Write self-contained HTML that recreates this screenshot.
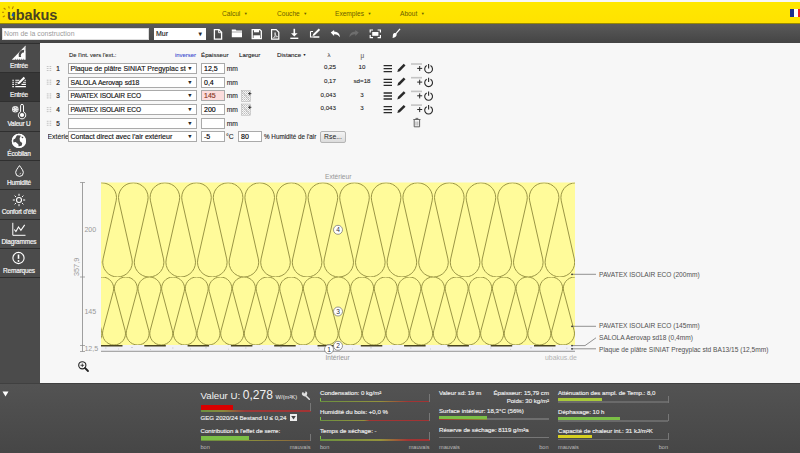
<!DOCTYPE html>
<html><head><meta charset="utf-8">
<style>
*{box-sizing:border-box;margin:0;padding:0}
html,body{width:800px;height:453px;overflow:hidden;background:#f7f7f7;font-family:"Liberation Sans",sans-serif;position:relative}
.a{position:absolute;white-space:nowrap}
#hdr{left:0;top:2px;width:800px;height:22px;background:linear-gradient(#ffe800,#ffe200);border-bottom:1px solid #9a8a00}
#tb{left:0;top:24px;width:800px;height:18.6px;background:linear-gradient(#5a5a5a,#444)}
#side{left:0;top:43px;width:40px;height:340px;background:#4b4b4b}
.si{position:absolute;left:0;width:40px;height:29px;border-top:1px solid #2f2f2f;color:#f4f4f4;font-size:6.1px;text-align:center}
.si span{position:absolute;left:-1px;width:40px;top:18px;line-height:8px;text-align:center;-webkit-text-stroke:0.2px #f4f4f4;font-size:6.5px;letter-spacing:-0.2px}
.si svg{position:absolute;left:0;top:0}
#bot{left:0;top:383px;width:800px;height:70px;background:linear-gradient(#535353,#464646);border-top:1px solid #404040}
.menu{color:#6a5d00;font-size:6.6px;top:9.5px;line-height:8px}
.menu i{font-style:normal;font-size:4px;margin-left:3.5px;position:relative;top:-1px}
.sel{-webkit-text-stroke:0.15px #222;position:absolute;background:#fff;border:1px solid #aaa;height:11px;font-size:7px;color:#111;padding-left:1.5px;line-height:10px;overflow:hidden;white-space:nowrap}
.sel b{position:absolute;right:3px;top:-1.3px;font-size:5.3px;color:#222;font-weight:normal;background:#fff;padding-left:1px}
.inp{-webkit-text-stroke:0.15px currentColor;position:absolute;background:#fff;border:1px solid #aaa;height:11px;font-size:7px;color:#000;padding-left:2px;line-height:10px}
.t6{font-size:6.2px;color:#1e1e1e;line-height:8px;-webkit-text-stroke:0.1px currentColor}
.num{font-size:6.4px;color:#222;line-height:8px;-webkit-text-stroke:0.2px #222}
.hd{font-size:5px;color:#aaa;line-height:8px;letter-spacing:-0.5px}
.wt{color:#eee;font-size:6.1px;line-height:8px;-webkit-text-stroke:0.15px #eee}
.g{color:#bbb;font-size:5.6px;line-height:7px}
.cl{font-size:6.6px;color:#505050;line-height:8px}
.trk{position:absolute;height:1.8px}
</style></head><body>
<div class="a" id="hdr"></div>
<!-- logo -->
<div class="a" style="left:7px;top:5.8px;font-size:14.5px;font-weight:bold;color:#4a4420;line-height:18px;letter-spacing:-0.1px">ubakus</div>
<svg class="a" style="left:0;top:0" width="20" height="24">
 <g stroke="#b37f00" stroke-width="1.1" stroke-linecap="round">
  <line x1="2.5" y1="12.3" x2="3.6" y2="12.3"/>
  <line x1="4" y1="8.3" x2="5.3" y2="9.2"/>
  <line x1="8.8" y1="6.7" x2="9.1" y2="8"/>
  <line x1="13.2" y1="6.8" x2="12.4" y2="8.6"/>
  <line x1="3.2" y1="16.8" x2="4.6" y2="16"/>
 </g>
 <path d="M12.9 12.2 q-1.2 2 -1.2 3 a1.2 1.2 0 0 0 2.4 0 q0-1 -1.2-3z" fill="#1d5ea8"/>
</svg>
<div class="a menu" style="left:222px">Calcul<i>&#9660;</i></div>
<div class="a menu" style="left:277px">Couche<i>&#9660;</i></div>
<div class="a menu" style="left:335px">Exemples<i>&#9660;</i></div>
<div class="a menu" style="left:400px">About<i>&#9660;</i></div>
<div class="a" style="left:790px;top:9px;width:4px;height:7.5px;background:#1c2f8c"></div>
<div class="a" style="left:794px;top:9px;width:3.5px;height:7.5px;background:#fff"></div>
<div class="a" style="left:797.5px;top:9px;width:2.5px;height:7.5px;background:#e22"></div>

<div class="a" id="tb"></div>
<div class="a" style="left:2px;top:28px;width:147px;height:12px;background:#fff;border:1px solid #ddd;font-size:6.9px;color:#9a9a9a;padding-left:1px;line-height:10px">Nom de la construction</div>
<div class="a" style="left:154px;top:28px;width:52px;height:12px;background:#fff;font-size:7px;color:#222;padding-left:2px;line-height:12px;-webkit-text-stroke:0.15px #222">Mur<span style="position:absolute;right:3px;font-size:5.5px;top:0">&#9660;</span></div>
<!-- toolbar icons -->
<svg class="a" style="left:205px;top:24px" width="200" height="19" fill="#fff" stroke="#fff">
 <path d="M9.4 5.7 h4.6 l2.6 2.6 v6.9 h-7.2z" fill="none" stroke-width="1.3"/>
 <path d="M13.6 5.7 v3 h3" fill="none" stroke-width="0.9"/>
 <path d="M26.8 5.5 h3.8 l0.8 0.9 h5.6 v1.3 h-10.2z M26.8 8.3 h10.2 v4.9 h-10.2z" stroke="none"/>
 <path d="M47.2 5.6 h7.6 l1.5 1.5 v7.6 h-9.1z" fill="none" stroke-width="1.3"/>
 <rect x="49" y="6" width="5" height="2.3" stroke="none"/>
 <rect x="48.5" y="11.3" width="6.5" height="3" stroke="none"/>
 <path d="M66.6 5.7 h4.6 l2.6 2.6 v6.9 h-7.2z" fill="none" stroke-width="1.2"/>
 <path d="M68.5 13.5 c1.5-1 2-3 1.6-5 c-0.5 2 0.5 3.5 2.5 4.2 c-1.7 0-3 0.3-4.1 0.8z" fill="none" stroke-width="0.7"/>
 <path d="M89.3 4.8 v6.3" fill="none" stroke-width="1.6"/>
 <path d="M86 9.2 h6.6 l-3.3 3.3z" stroke="none"/>
 <path d="M85.3 14.3 h8" fill="none" stroke-width="1.4"/>
 <path d="M105.5 7.5 h2.5 M105.5 7.5 v5.5 h8.5" fill="none" stroke-width="1.1"/>
 <path d="M107.5 12 l0.7-2 l5.6-5.4 l1.3 1.3 l-5.6 5.5z" stroke="none"/>
 <path d="M108.5 13 h6" fill="none" stroke-width="1"/>
 <path d="M125.7 8.5 l3.4-2.6 v1.7 c3.5 0.2 5.8 2.2 5.8 5.6 c-1.3-2-3.2-3-5.8-2.9 v1.8z" stroke="none"/>
 <path d="M153.7 8.5 l-3.4-2.6 v1.7 c-3.5 0.2-5.8 2.2-5.8 5.6 c1.3-2 3.2-3 5.8-2.9 v1.8z" fill="#6e6e6e" stroke="none"/>
 <path d="M165.2 8.6 v-2.6 h2.8 M172.6 6 h2.8 v2.6 M175.4 11 v2.6 h-2.8 M168 13.6 h-2.8 v-2.6" fill="none" stroke-width="1.2"/>
 <rect x="167.2" y="8" width="6.2" height="3.8" stroke="none"/>
 <path d="M195 4.8 l-4.3 5" fill="none" stroke-width="1.3"/>
 <path d="M189.5 9 c1.6-0.3 2.6 1 2 2.5 c-0.6 1.6-2.4 2.5-4.1 2.5 c0.6-0.7 0.3-2 0.5-3 c0.2-1 0.7-1.8 1.6-2z" stroke="none"/>
</svg>

<div class="a" id="side"></div>
<div class="si" style="top:43px">
 <svg width="40" height="20"><path d="M25.6 1.6 v14.2 h-13.8z" fill="#fff"/><path d="M24 5.8 a5.5 5.5 0 0 0 -5.2 7.2 h5.2z" fill="#4b4b4b"/><path d="M24 8.5 a3 3 0 0 0 -2.8 4.5 h2.8z" fill="#fff"/><path d="M15.5 15.8 v-1 M17.5 15.8 v-1 M19.5 15.8 v-1 M21.5 15.8 v-1 M23.5 15.8 v-1 M25.6 4 h-1 M25.6 6 h-1" stroke="#4b4b4b" stroke-width="0.6"/></svg>
 <span>Entrée</span></div>
<div class="si" style="top:72px;background:#383838">
 <svg width="40" height="20"><g stroke="#fff" stroke-width="1.1"><path d="M12.3 7.2 h1.6 M12.3 9.3 h1.6 M12.3 11.4 h1.6 M12.3 13.6 h1.6"/><path d="M15.3 7.2 h4 M15.3 9.3 h2.5 M15.3 11.4 h1.2 M15.3 13.6 h10.6 M21.5 11.4 h4.4 M23 9.3 h2.9 M24.5 7.2 h1.4"/></g><path d="M17.3 11.6 l0.9-2.3 l5.5-5.5 l1.4 1.4 l-5.5 5.5z" fill="#fff"/></svg>
 <span>Entrée</span></div>
<div class="si" style="top:101px">
 <svg width="40" height="20"><circle cx="15.3" cy="7.3" r="3.3" fill="#e8e8e8"/><g fill="#4b4b4b"><circle cx="15.3" cy="5.2" r="0.45"/><circle cx="15.3" cy="9.4" r="0.45"/><circle cx="13.5" cy="6.2" r="0.45"/><circle cx="17.1" cy="6.2" r="0.45"/><circle cx="13.5" cy="8.4" r="0.45"/><circle cx="17.1" cy="8.4" r="0.45"/></g><path d="M20.6 9.8 v-6 a1.45 1.45 0 0 1 2.9 0 v6 a3.7 3.7 0 1 1 -2.9 0z" fill="none" stroke="#fff" stroke-width="1"/><circle cx="22" cy="13" r="2.1" fill="#fff"/></svg>
 <span>Valeur U</span></div>
<div class="si" style="top:131px">
 <svg width="40" height="20"><circle cx="18.9" cy="8.9" r="7.1" fill="#fff"/><path d="M16.9 3.2 L20.9 3.4 L19.6 6.5 L20 9.2 L22.2 10.9 L21.8 13.6 L18.7 14.5 L18.3 12.2 L15.6 10 L13.4 10.5 L13.2 7.8 L15.2 6.5z M21.6 4.6 L23.4 5 L23 6.2 L21.8 6z" fill="#4b4b4b"/><circle cx="18.9" cy="8.9" r="6.6" fill="none" stroke="#fff" stroke-width="1.1"/></svg>
 <span>Écobilan</span></div>
<div class="si" style="top:160px">
 <svg width="40" height="20"><path d="M19.5 4.6 c-1.8 2.6-3.8 4.8-3.8 7 a3.8 3.8 0 0 0 7.6 0 c0-2.2-2-4.4-3.8-7z" fill="none" stroke="#fff" stroke-width="1"/><path d="M20.8 11.8 a1.3 1.3 0 0 1 -1.3 1.3" stroke="#fff" stroke-width="0.6" fill="none"/></svg>
 <span>Humidité</span></div>
<div class="si" style="top:189px">
 <svg width="40" height="20"><circle cx="19" cy="10" r="2.5" fill="none" stroke="#fff" stroke-width="1.1"/><g stroke="#fff" stroke-width="1" stroke-linecap="round"><path d="M19 4.2 v1.3 M19 14.5 v1.3 M13.2 10 h1.3 M23.5 10 h1.3 M14.9 5.9 l0.9 0.9 M22.2 13.2 l0.9 0.9 M14.9 14.1 l0.9-0.9 M22.2 6.8 l0.9-0.9"/></g></svg>
 <span>Confort d'été</span></div>
<div class="si" style="top:219px">
 <svg width="40" height="20"><path d="M12.8 2.8 v12.5 h12.7" fill="none" stroke="#fff" stroke-width="1"/><path d="M14.3 9.5 l1.6 2 l2.6-4.6 l2.4 3.3 l3.8-5.3" fill="none" stroke="#fff" stroke-width="1.1"/></svg>
 <span>Diagrammes</span></div>
<div class="si" style="top:248px">
 <svg width="40" height="20"><circle cx="18.5" cy="9" r="5.6" fill="none" stroke="#fff" stroke-width="1.1"/><path d="M18.5 5.5 v4.3" stroke="#fff" stroke-width="1.6"/><circle cx="18.5" cy="12" r="0.9" fill="#fff"/></svg>
 <span>Remarques</span></div>
<div class="a" style="left:0;top:277px;width:40px;height:1px;background:#2f2f2f"></div>

<!-- table header -->
<div class="a t6" style="left:69px;top:51px;font-size:5.9px">De l'int. vers l'ext.:</div>
<div class="a t6" style="left:175px;top:51px;color:#3b4cd0;font-size:5.9px">inverser</div>
<div class="a t6" style="left:201px;top:51px">Épaisseur</div>
<div class="a t6" style="left:239px;top:51px">Largeur</div>
<div class="a t6" style="left:277px;top:51px">Distance <span style="font-size:3.5px;position:relative;top:-1px">&#9660;</span></div>
<div class="a t6" style="left:327.5px;top:50.5px;color:#555;font-size:6px">λ</div>
<div class="a t6" style="left:360.5px;top:52px;color:#666;font-size:6.4px">μ</div>

<svg class="a" style="left:45px;top:60px" width="9" height="70">
 <g id="hh"><path d="M1 6.5 h6 M1 8.5 h6 M1 10.5 h6" stroke="#e2e2e2" stroke-width="0.6"/>
 <g fill="#b8b8b8"><rect x="2.3" y="6" width="1" height="1"/><rect x="4.8" y="6" width="1" height="1"/><rect x="2.3" y="8" width="1" height="1"/><rect x="4.8" y="8" width="1" height="1"/><rect x="2.3" y="10" width="1" height="1"/><rect x="4.8" y="10" width="1" height="1"/></g></g>
 <use href="#hh" y="13.7"/><use href="#hh" y="27.4"/><use href="#hh" y="41.1"/><use href="#hh" y="54.8"/>
</svg>
<div class="a num" style="left:56.3px;top:65px">1</div>
<div class="a num" style="left:56.3px;top:78.7px">2</div>
<div class="a num" style="left:56.3px;top:92.3px">3</div>
<div class="a num" style="left:56.3px;top:106px">4</div>
<div class="a num" style="left:56.3px;top:119.7px">5</div>
<div class="a t6" style="left:47.5px;top:133.3px;width:21px;overflow:hidden;font-size:6.9px">Extérieur</div>

<div class="sel" style="left:68px;top:63px;width:128.6px">Plaque de plâtre SINIAT Pregyplac std<b>&#9660;</b></div>
<div class="sel" style="left:68px;top:77px;width:128.6px"><span style="letter-spacing:-0.1px;word-spacing:0.5px;font-size:6.8px">SALOLA Aerovap sd18</span><b>&#9660;</b></div>
<div class="sel" style="left:68px;top:90px;width:128.6px"><span style="letter-spacing:-0.17px;word-spacing:0.6px;font-size:6.6px">PAVATEX ISOLAIR ECO</span><b>&#9660;</b></div>
<div class="sel" style="left:68px;top:104px;width:128.6px"><span style="letter-spacing:-0.17px;word-spacing:0.6px;font-size:6.6px">PAVATEX ISOLAIR ECO</span><b>&#9660;</b></div>
<div class="sel" style="left:68px;top:118px;width:128.6px"><b>&#9660;</b></div>
<div class="sel" style="left:68px;top:131px;width:128.6px">Contact direct avec l'air extérieur<b>&#9660;</b></div>

<div class="inp" style="left:201px;top:63px;width:24px">12,5</div>
<div class="inp" style="left:201px;top:77px;width:24px">0,4</div>
<div class="inp" style="left:201px;top:90px;width:24px;background:#fcdcdc;color:#832">145</div>
<div class="inp" style="left:201px;top:104px;width:24px">200</div>
<div class="inp" style="left:201px;top:118px;width:24px"></div>
<div class="inp" style="left:201px;top:131px;width:24px">-5</div>
<div class="inp" style="left:238px;top:131px;width:24px">80</div>
<div class="a t6" style="left:226.8px;top:65px;font-size:6.7px">mm</div>
<div class="a t6" style="left:226.8px;top:79px;font-size:6.7px">mm</div>
<div class="a t6" style="left:226.8px;top:92px;font-size:6.7px">mm</div>
<div class="a t6" style="left:226.8px;top:106px;font-size:6.7px">mm</div>
<div class="a t6" style="left:226.8px;top:120px;font-size:6.7px">mm</div>
<div class="a t6" style="left:226px;top:133px;font-size:6.8px">°C</div>
<div class="a t6" style="left:264px;top:133.3px;font-size:6.3px">% Humidité de l'air</div>
<div class="a" style="left:320px;top:131px;width:26px;height:12px;background:linear-gradient(#f4f4f4,#dcdcdc);border:1px solid #b5b5b5;border-radius:2px;font-size:6.8px;color:#222;text-align:center;line-height:10px">Rse...</div>

<!-- width icons -->
<svg class="a" style="left:240px;top:89px" width="14" height="28">
 <defs><pattern id="ht" width="2" height="2" patternUnits="userSpaceOnUse"><rect width="1" height="1" fill="#bdbdbd"/><rect x="1" y="1" width="1" height="1" fill="#d4d4d4"/></pattern></defs>
 <rect x="1.3" y="1.3" width="9" height="11.2" fill="url(#ht)" stroke="#b0b0b0" stroke-width="0.5"/>
 <path d="M1.5 1.5 l8.5 10.8" stroke="#a8a8a8" stroke-width="0.5"/>
 <rect x="1.3" y="15" width="9" height="11.2" fill="url(#ht)" stroke="#b0b0b0" stroke-width="0.5"/>
 <path d="M1.5 15.2 l8.5 10.8" stroke="#a8a8a8" stroke-width="0.5"/>
 <path d="M8 4.6 h3.4 M9.7 2.9 v3.4 M8 18.3 h3.4 M9.7 16.6 v3.4" stroke="#333" stroke-width="0.9"/>
</svg>

<!-- lambda / mu values -->
<div class="a t6" style="left:320px;top:63px;width:16px;text-align:right">0,25</div>
<div class="a t6" style="left:320px;top:77px;width:16px;text-align:right">0,17</div>
<div class="a t6" style="left:316px;top:90.5px;width:20px;text-align:right">0,043</div>
<div class="a t6" style="left:316px;top:104px;width:20px;text-align:right">0,043</div>
<div class="a t6" style="left:350px;top:63px;width:24px;text-align:center">10</div>
<div class="a t6" style="left:350px;top:77px;width:24px;text-align:center">sd=18</div>
<div class="a t6" style="left:350px;top:90.5px;width:24px;text-align:center">3</div>
<div class="a t6" style="left:350px;top:104px;width:24px;text-align:center">3</div>

<!-- row icons -->
<svg class="a" style="left:380px;top:60px" width="60" height="70">
 <g id="ri">
  <path d="M3.6 5.6 h8.4 M3.6 8.6 h8.4 M3.6 11.6 h8.4" stroke="#2a2a2a" stroke-width="1.3"/>
  <path d="M17.3 12 l0.8-2.6 l5.6-5.6 l1.8 1.8 l-5.6 5.6z" fill="#2a2a2a"/>
  <rect x="31" y="3.2" width="11" height="1.6" fill="#c4c4c4"/>
  <path d="M37.2 8.4 h5 M39.7 6 v5" stroke="#2a2a2a" stroke-width="1"/>
  <path d="M46.7 5.6 a3.9 3.9 0 1 0 3.8 0" fill="none" stroke="#2a2a2a" stroke-width="1.1"/>
  <path d="M48.6 4 v4.4" stroke="#2a2a2a" stroke-width="1.1"/>
 </g>
 <use href="#ri" y="13.7"/>
 <use href="#ri" y="27.4"/>
 <use href="#ri" y="41.1"/>
 <path d="M33.3 59.5 h7.2 M35.5 58.4 h2.8" fill="none" stroke="#555" stroke-width="0.9"/>
 <path d="M34.2 60 v6.8 h5.4 v-6.8" fill="none" stroke="#555" stroke-width="0.9"/>
 <path d="M36 61.5 v4 M37.8 61.5 v4" stroke="#777" stroke-width="0.6"/>
</svg>

<!-- chart -->
<svg class="a" style="left:0;top:0" width="800" height="453">
 <defs><clipPath id="c4"><rect x="101" y="182.5" width="474" height="94.5"/></clipPath>
 <clipPath id="c3"><rect x="101" y="277" width="474" height="68"/></clipPath></defs>
 <rect x="101" y="182.5" width="474" height="162.5" fill="#fffb9a"/>
 <path d="M55.66,200.85 A14.80,14.80 0 1 1 84.54,200.85 L71.46,258.95 A14.80,14.80 0 1 0 100.34,258.95 L87.26,200.85 A14.80,14.80 0 1 1 116.14,200.85 L103.06,258.95 A14.80,14.80 0 1 0 131.94,258.95 L118.86,200.85 A14.80,14.80 0 1 1 147.74,200.85 L134.66,258.95 A14.80,14.80 0 1 0 163.54,258.95 L150.46,200.85 A14.80,14.80 0 1 1 179.34,200.85 L166.26,258.95 A14.80,14.80 0 1 0 195.14,258.95 L182.06,200.85 A14.80,14.80 0 1 1 210.94,200.85 L197.86,258.95 A14.80,14.80 0 1 0 226.74,258.95 L213.66,200.85 A14.80,14.80 0 1 1 242.54,200.85 L229.46,258.95 A14.80,14.80 0 1 0 258.34,258.95 L245.26,200.85 A14.80,14.80 0 1 1 274.14,200.85 L261.06,258.95 A14.80,14.80 0 1 0 289.94,258.95 L276.86,200.85 A14.80,14.80 0 1 1 305.74,200.85 L292.66,258.95 A14.80,14.80 0 1 0 321.54,258.95 L308.46,200.85 A14.80,14.80 0 1 1 337.34,200.85 L324.26,258.95 A14.80,14.80 0 1 0 353.14,258.95 L340.06,200.85 A14.80,14.80 0 1 1 368.94,200.85 L355.86,258.95 A14.80,14.80 0 1 0 384.74,258.95 L371.66,200.85 A14.80,14.80 0 1 1 400.54,200.85 L387.46,258.95 A14.80,14.80 0 1 0 416.34,258.95 L403.26,200.85 A14.80,14.80 0 1 1 432.14,200.85 L419.06,258.95 A14.80,14.80 0 1 0 447.94,258.95 L434.86,200.85 A14.80,14.80 0 1 1 463.74,200.85 L450.66,258.95 A14.80,14.80 0 1 0 479.54,258.95 L466.46,200.85 A14.80,14.80 0 1 1 495.34,200.85 L482.26,258.95 A14.80,14.80 0 1 0 511.14,258.95 L498.06,200.85 A14.80,14.80 0 1 1 526.94,200.85 L513.86,258.95 A14.80,14.80 0 1 0 542.74,258.95 L529.66,200.85 A14.80,14.80 0 1 1 558.54,200.85 L545.46,258.95 A14.80,14.80 0 1 0 574.34,258.95 L561.26,200.85 A14.80,14.80 0 1 1 590.14,200.85 L577.06,258.95 A14.80,14.80 0 1 0 605.94,258.95 L592.86,200.85 A14.80,14.80 0 1 1 621.74,200.85 L608.66,258.95 A14.80,14.80 0 1 0 637.54,258.95" fill="none" stroke="#9a9545" stroke-width="1" clip-path="url(#c4)"/>
 <path d="M67.46,291.46 A11.50,11.50 0 1 1 89.68,291.46 L79.27,330.54 A11.50,11.50 0 1 0 101.50,330.54 L91.09,291.46 A11.50,11.50 0 1 1 113.31,291.46 L102.90,330.54 A11.50,11.50 0 1 0 125.13,330.54 L114.72,291.46 A11.50,11.50 0 1 1 136.94,291.46 L126.53,330.54 A11.50,11.50 0 1 0 148.76,330.54 L138.35,291.46 A11.50,11.50 0 1 1 160.57,291.46 L150.16,330.54 A11.50,11.50 0 1 0 172.39,330.54 L161.98,291.46 A11.50,11.50 0 1 1 184.20,291.46 L173.79,330.54 A11.50,11.50 0 1 0 196.02,330.54 L185.61,291.46 A11.50,11.50 0 1 1 207.83,291.46 L197.42,330.54 A11.50,11.50 0 1 0 219.65,330.54 L209.24,291.46 A11.50,11.50 0 1 1 231.46,291.46 L221.05,330.54 A11.50,11.50 0 1 0 243.28,330.54 L232.87,291.46 A11.50,11.50 0 1 1 255.09,291.46 L244.68,330.54 A11.50,11.50 0 1 0 266.91,330.54 L256.50,291.46 A11.50,11.50 0 1 1 278.72,291.46 L268.31,330.54 A11.50,11.50 0 1 0 290.54,330.54 L280.13,291.46 A11.50,11.50 0 1 1 302.35,291.46 L291.94,330.54 A11.50,11.50 0 1 0 314.17,330.54 L303.76,291.46 A11.50,11.50 0 1 1 325.98,291.46 L315.57,330.54 A11.50,11.50 0 1 0 337.80,330.54 L327.39,291.46 A11.50,11.50 0 1 1 349.61,291.46 L339.20,330.54 A11.50,11.50 0 1 0 361.43,330.54 L351.02,291.46 A11.50,11.50 0 1 1 373.24,291.46 L362.83,330.54 A11.50,11.50 0 1 0 385.06,330.54 L374.65,291.46 A11.50,11.50 0 1 1 396.87,291.46 L386.46,330.54 A11.50,11.50 0 1 0 408.69,330.54 L398.28,291.46 A11.50,11.50 0 1 1 420.50,291.46 L410.09,330.54 A11.50,11.50 0 1 0 432.32,330.54 L421.91,291.46 A11.50,11.50 0 1 1 444.13,291.46 L433.72,330.54 A11.50,11.50 0 1 0 455.95,330.54 L445.54,291.46 A11.50,11.50 0 1 1 467.76,291.46 L457.35,330.54 A11.50,11.50 0 1 0 479.58,330.54 L469.17,291.46 A11.50,11.50 0 1 1 491.39,291.46 L480.98,330.54 A11.50,11.50 0 1 0 503.21,330.54 L492.80,291.46 A11.50,11.50 0 1 1 515.02,291.46 L504.61,330.54 A11.50,11.50 0 1 0 526.84,330.54 L516.43,291.46 A11.50,11.50 0 1 1 538.65,291.46 L528.24,330.54 A11.50,11.50 0 1 0 550.47,330.54 L540.06,291.46 A11.50,11.50 0 1 1 562.28,291.46 L551.87,330.54 A11.50,11.50 0 1 0 574.10,330.54 L563.69,291.46 A11.50,11.50 0 1 1 585.91,291.46 L575.50,330.54 A11.50,11.50 0 1 0 597.73,330.54 L587.32,291.46 A11.50,11.50 0 1 1 609.54,291.46 L599.13,330.54 A11.50,11.50 0 1 0 621.36,330.54 L610.95,291.46 A11.50,11.50 0 1 1 633.17,291.46 L622.76,330.54 A11.50,11.50 0 1 0 644.99,330.54" fill="none" stroke="#9a9545" stroke-width="1" clip-path="url(#c3)"/>
 <!-- plaster -->
 <rect x="101" y="345" width="474" height="6" fill="#f1f1f5"/>
 <path d="M105 348 h1.5 M118 349 h1 M131 347.5 h2 M150 349.5 h1 M172 348 h1.5 M190 349 h1 M205 347.8 h2 M228 349.2 h1 M245 348 h1.5 M262 349.5 h1 M280 347.6 h2 M300 349 h1 M318 348.2 h1.5 M352 349 h1 M370 347.8 h2 M392 349.3 h1 M410 348 h1.5 M430 349 h1 M448 347.7 h2 M470 349.2 h1 M490 348 h1.5 M510 349.4 h1 M530 347.8 h2 M552 349 h1 M566 348.2 h1.5" stroke="#c8c8d0" stroke-width="0.8"/>
 <line x1="101" y1="351.3" x2="575" y2="351.3" stroke="#8a8a8a" stroke-width="0.9"/>
 <!-- membrane dashes -->
 <line x1="101" y1="345.8" x2="575" y2="345.8" stroke="#4a4520" stroke-width="1.4" stroke-dasharray="21.5 21.8"/>
 <!-- dimension lines -->
 <line x1="82.5" y1="182.5" x2="82.5" y2="351.5" stroke="#888" stroke-width="0.8"/>
 <path d="M80 182.5 h5 M80 277 h5 M80 345.5 h5 M80 351.5 h5" stroke="#888" stroke-width="0.7"/>
 <!-- leader lines -->
 <g stroke="#777" stroke-width="0.8" fill="none">
  <path d="M572 274.3 H596"/>
  <path d="M572 326.3 H596"/>
  <path d="M572 345.6 H585 L596 337.8"/>
  <path d="M572 348.8 H596"/>
 </g>
 <g fill="#333"><circle cx="572" cy="274.3" r="0.9"/><circle cx="572" cy="326.3" r="0.9"/><circle cx="572" cy="345.6" r="0.9"/><circle cx="572" cy="348.8" r="0.9"/></g>
 <!-- markers -->
 <g fill="#fff" stroke="#6a6a6a" stroke-width="0.7">
  <circle cx="338" cy="229.8" r="4.5"/>
  <circle cx="338" cy="311.5" r="4.5"/>
  <circle cx="338" cy="345.8" r="4.5"/>
  <circle cx="329" cy="349.3" r="4.5"/>
 </g>
 <g font-family="Liberation Sans" font-size="6.6" fill="#2a2d40" text-anchor="middle">
  <text x="338" y="232.3">4</text>
  <text x="338" y="313.8">3</text>
  <text x="338" y="348.1">2</text>
  <text x="329" y="351.6">1</text>
 </g>
</svg>
<div class="a cl" style="left:325px;top:172.5px;color:#959595">Extérieur</div>
<div class="a cl" style="left:325.5px;top:353.8px;color:#959595">Intérieur</div>
<div class="a cl" style="left:84.4px;top:225.8px;color:#999;font-size:7.1px">200</div>
<div class="a cl" style="left:84.4px;top:307.6px;color:#999;font-size:7.1px">145</div>
<div class="a cl" style="left:84.4px;top:345.2px;color:#999;font-size:7.1px">12,5</div>
<div class="a cl" style="left:73.3px;top:275.6px;color:#999;font-size:7.3px;transform:rotate(-90deg);transform-origin:0 0">357,9</div>
<div class="a cl" style="left:599px;top:270.5px">PAVATEX ISOLAIR ECO (200mm)</div>
<div class="a cl" style="left:599px;top:322.3px">PAVATEX ISOLAIR ECO (145mm)</div>
<div class="a cl" style="left:599px;top:334px">SALOLA Aerovap sd18 (0,4mm)</div>
<div class="a cl" style="left:599px;top:345.5px">Plaque de plâtre SINIAT Pregyplac std BA13/15 (12,5mm)</div>
<div class="a cl" style="left:545px;top:353.5px;color:#b4b4b4;font-size:6.9px">ubakus.de</div>
<!-- zoom icon -->
<svg class="a" style="left:76px;top:359px" width="16" height="16">
 <circle cx="6.3" cy="6.3" r="3.6" fill="none" stroke="#222" stroke-width="1.1"/>
 <path d="M4.5 6.3 h3.6 M6.3 4.5 v3.6" stroke="#222" stroke-width="0.8"/>
 <path d="M9 9 l3 3" stroke="#222" stroke-width="1.8" stroke-linecap="round"/>
</svg>

<div class="a" id="bot"></div>
<svg class="a" style="left:1.6px;top:389.6px" width="8" height="8"><path d="M0.5 1.5 h6 l-3 5z" fill="#fff"/></svg>
<!-- col1 -->
<div class="a" style="left:200.5px;top:390px;color:#f2f2f2;font-size:9.7px;line-height:11px">Valeur U: <span style="font-size:12px">0,278</span> <span style="font-size:5.8px">W/(m²K)</span></div>
<svg class="a" style="left:300px;top:390px" width="11" height="11"><path d="M5 5 l4.3 4.3" stroke="#e0e0e0" stroke-width="1.5" stroke-linecap="round"/><path d="M2.2 2.6 a2.6 2.6 0 1 0 3.3-1.3 l-0.3 1.8 l-1.3 0.3 l-0.6-1.3z" fill="#e0e0e0"/></svg>
<div class="a" style="left:200.5px;top:405.2px;width:32.3px;height:5px;background:#d80000"></div>
<div class="trk" style="left:200.5px;top:410.2px;width:110px;background:linear-gradient(90deg,#6a9040,#8c8a3c 20%,#9c3838 40%,#a23434)"></div>
<div class="a" style="left:310px;top:403px;width:0.8px;height:8px;background:#777"></div>
<div class="a wt" style="left:200.5px;top:413.5px">GEG 2020/24 Bestand U ≤ 0,24</div>
<div class="a" style="left:290px;top:414px;width:7px;height:7px;background:#eee"><svg width="7" height="7" style="position:absolute;left:0;top:0"><path d="M1.2 2 h4.6 l-2.3 3.5z" fill="#444"/></svg></div>
<div class="a wt" style="left:200.5px;top:426.5px">Contribution à l'effet de serre:</div>
<div class="a" style="left:200.5px;top:435.5px;width:48.5px;height:4px;background:#7bbf46"></div>
<div class="trk" style="left:200.5px;top:439.5px;width:110px;background:linear-gradient(90deg,#6a9040,#8c8a3c 50%,#8a5a3a)"></div>
<div class="a" style="left:310px;top:434px;width:0.8px;height:7px;background:#777"></div>
<div class="a g" style="left:200.5px;top:444.3px">bon</div>
<div class="a g" style="left:260px;top:444.3px;width:50.5px;text-align:right">mauvais</div>
<!-- col2 -->
<div class="a wt" style="left:320px;top:388.5px">Condensation: 0 kg/m²</div>
<div class="a" style="left:320px;top:398px;width:1px;height:3px;background:#7bbf46"></div>
<div class="trk" style="left:320px;top:400.5px;width:109.5px;background:linear-gradient(90deg,#6a9040,#94923c 55%,#a23434 80%)"></div>
<div class="a" style="left:429px;top:394px;width:0.8px;height:8px;background:#777"></div>
<div class="a wt" style="left:320px;top:407.5px">Humidité du bois: +0,0 %</div>
<div class="a" style="left:320px;top:417px;width:1px;height:3px;background:#7bbf46"></div>
<div class="trk" style="left:320px;top:419.5px;width:109.5px;background:linear-gradient(90deg,#6a9040,#94923c 40%,#a23434 45%)"></div>
<div class="a" style="left:429px;top:413px;width:0.8px;height:8px;background:#777"></div>
<div class="a wt" style="left:320px;top:426.5px">Temps de séchage: -</div>
<div class="a" style="left:320px;top:436px;width:1px;height:3px;background:#7bbf46"></div>
<div class="trk" style="left:320px;top:438.8px;width:109.5px;background:linear-gradient(90deg,#6a9040,#94923c 55%,#a23434 80%)"></div>
<div class="a" style="left:429px;top:432px;width:0.8px;height:8px;background:#777"></div>
<div class="a g" style="left:320px;top:444.3px">bon</div>
<div class="a g" style="left:379px;top:444.3px;width:50.5px;text-align:right">mauvais</div>
<!-- col3 -->
<div class="a wt" style="left:439px;top:388.5px">Valeur sd: 19 m</div>
<div class="a wt" style="left:478px;top:388.5px;width:71px;text-align:right">Épaisseur: 15,79 cm</div>
<div class="a wt" style="left:478px;top:397px;width:71px;text-align:right">Poids: 30 kg/m²</div>
<div class="a wt" style="left:439px;top:407px">Surface intérieur: 18,3°C (56%)</div>
<div class="trk" style="left:439px;top:417.5px;width:110px;height:2px;background:#6e6e6e"></div>
<div class="a" style="left:439px;top:415.8px;width:48px;height:3.4px;background:#7bbf46"></div>
<div class="trk" style="left:439px;top:419.2px;width:48px;height:1px;background:linear-gradient(90deg,#a23434,#8c8a3c)"></div>
<div class="a wt" style="left:439px;top:426px">Réserve de séchage: 8119 g/m²a</div>
<div class="trk" style="left:439px;top:436.8px;width:110px;height:1px;background:#777"></div>
<div class="a g" style="left:439px;top:444.3px">mauvais</div>
<div class="a g" style="left:498px;top:444.3px;width:50.5px;text-align:right">bon</div>
<!-- col4 -->
<div class="a wt" style="left:558px;top:388.5px">Atténuation des ampl. de Temp.: 8,0</div>
<div class="a" style="left:558px;top:397.8px;width:44px;height:3px;background:#a8c83a"></div>
<div class="trk" style="left:558px;top:400.8px;width:110px;background:#6a6a6a"></div>
<div class="a" style="left:668px;top:396px;width:0.8px;height:7px;background:#777"></div>
<div class="a wt" style="left:558px;top:407.8px">Déphasage: 10 h</div>
<div class="a" style="left:558px;top:416.6px;width:62px;height:3.2px;background:#7bbf46"></div>
<div class="trk" style="left:558px;top:419.8px;width:110px;background:#6a6a6a"></div>
<div class="a" style="left:668px;top:414px;width:0.8px;height:7px;background:#777"></div>
<div class="a wt" style="left:558px;top:426.8px">Capacité de chaleur int.: 31 kJ/m²K</div>
<div class="a" style="left:558px;top:435.3px;width:34px;height:3.2px;background:#d8d020"></div>
<div class="trk" style="left:558px;top:438.5px;width:110px;background:#6a6a6a"></div>
<div class="a" style="left:668px;top:433px;width:0.8px;height:7px;background:#777"></div>
<div class="a g" style="left:558px;top:444.3px">mauvais</div>
<div class="a g" style="left:617.5px;top:444.3px;width:50.5px;text-align:right">bon</div>

</body></html>
